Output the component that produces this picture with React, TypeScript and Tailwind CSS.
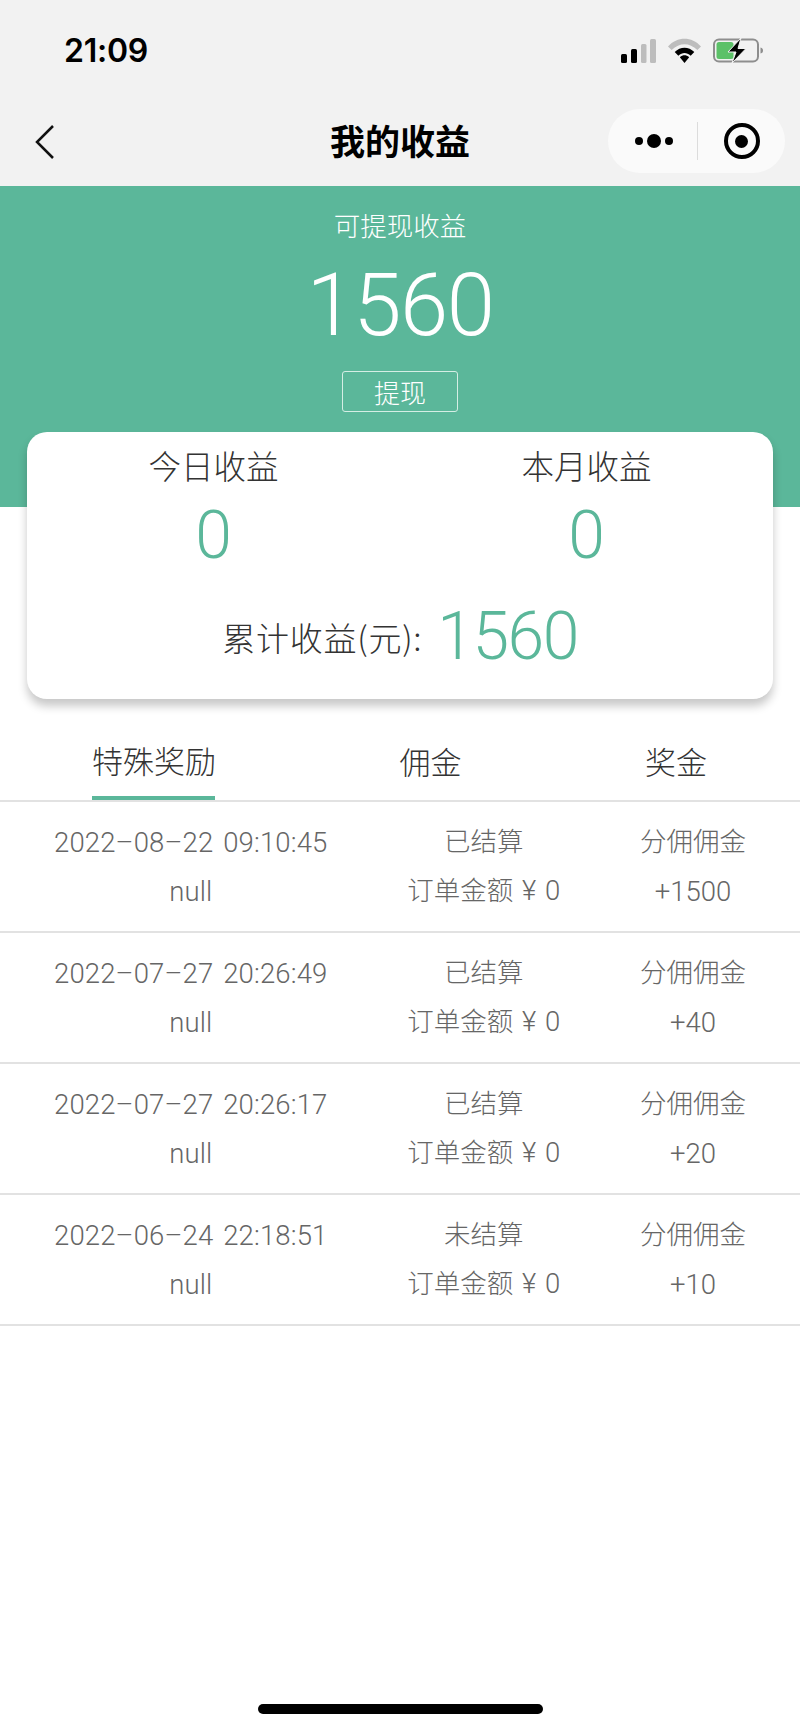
const rows = [
  { time: "2022–08–22 09:10:45", state: "已结算", amount: "+1500" },
  { time: "2022–07–27 20:26:49", state: "已结算", amount: "+40" },
  { time: "2022–07–27 20:26:17", state: "已结算", amount: "+20" },
  { time: "2022–06–24 22:18:51", state: "未结算", amount: "+10" },
];

function SignalIcon() {
  return (
    <svg width="35" height="24" viewBox="0 0 35 24" className="block">
      <rect x="0" y="15" width="6" height="9" rx="1.5" fill="#000" />
      <rect x="10" y="10" width="6" height="14" rx="1.5" fill="#000" />
      <rect x="20" y="5" width="5.5" height="19" rx="1.5" fill="#bdbdbd" />
      <rect x="29" y="0" width="6" height="24" rx="1.5" fill="#bdbdbd" />
    </svg>
  );
}

function WifiIcon() {
  return (
    <svg width="33" height="25" viewBox="0 0 32 24" className="block">
      <path d="M0 8C9 -2 23 -2 32 8L28.500 11.500C20.500 4 11.500 4 3.500 11.500Z" fill="#bdbdbd" />
      <path d="M6.500 13.500C12 8 20 8 25.500 13.500L22 17C18 13.500 14 13.500 10 17Z" fill="#000" />
      <path d="M11.500 18.500C14.500 16 17.500 16 20.500 18.500L16 24Z" fill="#000" />
    </svg>
  );
}

function BatteryIcon() {
  return (
    <svg width="51" height="25" viewBox="0 0 51 25" className="block">
      <rect x="1" y="1.500" width="44" height="22" rx="5" fill="none" stroke="#8e8e8e" strokeWidth="2" />
      <rect x="3.500" y="4" width="17" height="17" rx="2.500" fill="#5cc168" />
      <path d="M47.500 9.500C49.500 10 50 11 50 12.500C50 14 49.500 15 47.500 15.500Z" fill="#8e8e8e" />
      <path d="M28 0L15 14H23L19 25L33 10.500H25Z" fill="#000" stroke="#f2f2f2" strokeWidth="1" />
    </svg>
  );
}

function Capsule() {
  return (
    <div className="mr-[15px] flex h-[64px] w-[177px] items-center rounded-full bg-[#fafafa]">
      <div className="flex w-[89px] items-center justify-center gap-[4px] pl-[2px]">
        <span className="h-[8px] w-[8px] rounded-full bg-black" />
        <span className="h-[14px] w-[14px] rounded-full bg-black" />
        <span className="h-[8px] w-[8px] rounded-full bg-black" />
      </div>
      <div className="h-[38px] w-px bg-[#dcdcdc]" />
      <div className="flex flex-1 items-center justify-center">
        <div className="flex h-[36px] w-[36px] items-center justify-center rounded-full border-[4px] border-black">
          <span className="h-[13px] w-[13px] rounded-full bg-black" />
        </div>
      </div>
    </div>
  );
}

function Header() {
  return (
    <div className="bg-[#f2f2f2]">
      <div className="flex h-[100px] items-start justify-between pl-[64px] pr-[36px]">
        <span className="mt-[31px] font-['Inter'] text-[32px] leading-[40px] font-semibold tracking-[-0.25px] text-black">21:09</span>
        <div className="mt-[38px] flex items-center">
          <SignalIcon />
          <div className="ml-[12px]"><WifiIcon /></div>
          <div className="ml-[12px]"><BatteryIcon /></div>
        </div>
      </div>
      <div className="flex h-[86px] items-start pt-[9px]">
        <div className="flex-1">
          <svg width="20" height="36" viewBox="0 0 20 36" fill="none" className="mt-[15px] ml-[35px] block">
            <path d="M18 2L2 18L18 34" stroke="#111" strokeWidth="2.500" />
          </svg>
        </div>
        <span className="mt-[7px] text-[35px] leading-[48px] font-bold text-black">我的收益</span>
        <div className="flex flex-1 justify-end">
          <Capsule />
        </div>
      </div>
    </div>
  );
}

function Hero() {
  return (
    <div className="flex h-[321px] flex-col items-center bg-[#5bb79a] text-white">
      <span className="mt-[20px] text-[26.5px] leading-[38px] font-light">可提现收益</span>
      <span className="mt-[15px] font-['Roboto'] text-[87px] leading-[92px] font-light tracking-[-1.5px]">1560</span>
      <button className="mt-[20px] h-[41px] w-[116px] rounded-[3px] border border-[#d5eee5] text-[26px] leading-[36px] font-light">提现</button>
    </div>
  );
}

function SummaryCard() {
  return (
    <div className="relative mx-[27px] mt-[-75px] h-[267px] rounded-[20px] bg-white shadow-[0_7px_10px_rgba(0,0,0,0.22)]">
      <div className="flex">
        <div className="flex flex-1 flex-col items-center pt-[10px]">
          <span className="text-[32.5px] leading-[46px] font-light text-[#333]">今日收益</span>
          <span className="mt-[13px] font-['Roboto'] text-[66px] leading-[70px] font-light text-[#5bb79a]">0</span>
        </div>
        <div className="flex flex-1 flex-col items-center pt-[10px]">
          <span className="text-[32.5px] leading-[46px] font-light text-[#333]">本月收益</span>
          <span className="mt-[13px] font-['Roboto'] text-[66px] leading-[70px] font-light text-[#5bb79a]">0</span>
        </div>
      </div>
      <div className="mt-[31px] flex items-center justify-center">
        <span className="text-[33px] leading-[46px] font-light tracking-[0.75px] text-[#333]">累计收益(元):</span>
        <span className="ml-[15px] font-['Roboto'] text-[66px] leading-[70px] font-light tracking-[-1.5px] text-[#5bb79a]">1560</span>
      </div>
    </div>
  );
}

function Tabs() {
  return (
    <div className="flex h-[103px] items-end justify-between border-b-2 border-[#e2e2e2] pl-[92px] pr-[93px]">
      <div className="flex h-[62px] flex-col justify-between">
        <span className="text-[31px] leading-[44px] font-light text-[#333]">特殊奖励</span>
        <span className="h-[4px] w-[123px] bg-[#5bb79a]" />
      </div>
      <span className="mb-[13px] text-[31px] leading-[52px] font-light text-[#333]">佣金</span>
      <span className="mb-[13px] text-[31px] leading-[52px] font-light text-[#333]">奖金</span>
    </div>
  );
}

function Row({ time, state, amount }: { time: string; state: string; amount: string }) {
  return (
    <div className="flex h-[131px] justify-between border-b-2 border-[#e2e2e2] px-[54px] pt-[16px] text-center text-[26.5px] leading-[49px] font-light text-[#666]">
      <div className="font-['Roboto'] text-[27.5px] tracking-[0.15px] [word-spacing:3px]">
        <div>{time}</div>
        <div>null</div>
      </div>
      <div className="-mt-[3px]">
        <div>{state}</div>
        <div>订单金额<span className="font-['Roboto'] text-[27.5px] [word-spacing:2px]"> ¥ 0</span></div>
      </div>
      <div>
        <div className="-mt-[3px] mb-[3px]">分佣佣金</div>
        <div className="font-['Roboto'] text-[27.5px]">{amount}</div>
      </div>
    </div>
  );
}

export default function App() {
  return (
    <div className="flex h-[1731px] w-[800px] flex-col overflow-hidden bg-white font-['Noto_Sans_CJK_SC',sans-serif]">
      <Header />
      <Hero />
      <SummaryCard />
      <Tabs />
      {rows.map((r) => (
        <Row key={r.time} {...r} />
      ))}
      <div className="mx-auto mt-auto mb-[17px] h-[10px] w-[285px] rounded-full bg-black" />
    </div>
  );
}
